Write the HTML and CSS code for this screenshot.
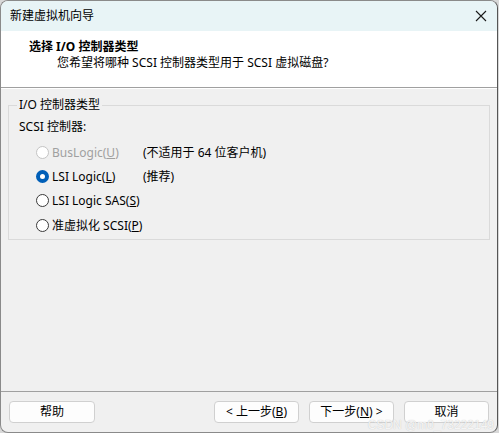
FILE: index.html
```html
<!DOCTYPE html>
<html lang="zh-CN">
<head>
<meta charset="utf-8">
<title>新建虚拟机向导</title>
<link rel="stylesheet" href="styles.css">
</head>
<body>
<div class="window">
  <div class="titlebar">
    <span class="title">新建虚拟机向导</span>
    <svg class="close" width="12" height="12" viewBox="0 0 12 12"><path d="M1 1 L11 11 M11 1 L1 11" stroke="#1a1a1a" stroke-width="1.1" fill="none"/></svg>
  </div>
  <div class="header">
    <div class="h-title">选择 I/O 控制器类型</div>
    <div class="h-sub">您希望将哪种 SCSI 控制器类型用于 SCSI 虚拟磁盘?</div>
  </div>
  <div class="content">
    <fieldset class="group">
      <legend>I/O 控制器类型</legend>
      <div class="sub-label">SCSI 控制器:</div>
      <div class="options">
        <div class="row disabled"><span class="radio"></span><span class="lbl">BusLogic(<u>U</u>)</span><span class="note">(不适用于 64 位客户机)</span></div>
        <div class="row"><span class="radio checked"></span><span class="lbl">LSI Logic(<u>L</u>)</span><span class="note">(推荐)</span></div>
        <div class="row"><span class="radio"></span><span class="lbl">LSI Logic SAS(<u>S</u>)</span></div>
        <div class="row"><span class="radio"></span><span class="lbl">准虚拟化 SCSI(<u>P</u>)</span></div>
      </div>
    </fieldset>
  </div>
  <div class="footer">
    <button class="btn help">帮助</button>
    <div class="nav">
      <button class="btn">&lt; 上一步(<u>B</u>)</button>
      <button class="btn">下一步(<u>N</u>) &gt;</button>
      <button class="btn">取消</button>
    </div>
    <span class="watermark">CSDN @m0_73222149</span>
  </div>
</div>
</body>
</html>
```
FILE: styles.css
```css
* { box-sizing: border-box; }
html, body { margin: 0; padding: 0; background: #d8d8d8; }
body {
  width: 499px; height: 433px; overflow: hidden;
  font-family: "Noto Sans", "Noto Sans CJK SC", sans-serif;
  font-size: 12px; color: #000;
}
.window {
  width: 498px; height: 433px;
  border: 1px solid #8a8a8a;
  border-right-color: #555;
  border-radius: 8px;
  overflow: hidden;
  background: #f0f0f0;
  display: flex; flex-direction: column;
}
.titlebar {
  height: 30px; flex: none;
  background: #e8f4f6;
  display: flex; align-items: center; justify-content: space-between;
  padding: 0 9px 0 9px;
}
.title { line-height: 16px; }
.close { margin-right: 1px; }
.header {
  height: 57px; flex: none;
  background: #fff;
  border-bottom: 1px solid #a0a0a0;
  padding: 8px 0 0 28px;
}
.h-title { font-weight: bold; line-height: 16px; }
.h-sub { line-height: 16px; padding-left: 28px; }
.content {
  flex: 1;
  padding: 8px 7px 0 7px;
  border-top: 1px solid #fff;
}
.group {
  margin: 0; padding: 6px 10px 0 10px;
  border: 1px solid #dadada;
  height: 143px;
}
legend { padding: 0 2px; line-height: 16px; margin-left: -2px; }
.sub-label { line-height: 16px; }
.options { margin-top: 5px; padding-left: 17px; display: flex; flex-direction: column; }
.row { display: flex; align-items: center; height: 24.3px; }
.radio {
  width: 13px; height: 13px; border-radius: 50%;
  border: 1px solid #3a3a3a; background: #fff;
  flex: none; margin-right: 3px;
}
.radio.checked {
  border: 4px solid #005fb8; background: #fff;
}
.row.disabled .radio { border-color: #c4c4c4; }
.row.disabled .lbl { color: #a0a0a0; }
.lbl { width: 91px; white-space: nowrap; }
.note { white-space: nowrap; }
.footer {
  height: 41px; flex: none;
  border-top: 1px solid #a0a0a0;
  display: flex; justify-content: space-between; align-items: flex-start;
  padding: 9px 8px 0 8px;
  position: relative;
}
.nav { display: flex; gap: 10px; }
.btn {
  width: 85px; height: 22px;
  font: inherit; color: #000;
  background: #fdfdfd;
  border: 1px solid #d0d0d0;
  border-radius: 4px;
  padding: 0; line-height: 18px;
}
.btn.help { width: 86px; }
.watermark {
  position: absolute; right: 3px; bottom: 0px;
  color: rgba(255,255,255,0.85);
  text-shadow: 0 0 1px #b8b8b8;
  font-size: 12px; line-height: 14px;
  font-family: "Liberation Sans", sans-serif;
}
```
